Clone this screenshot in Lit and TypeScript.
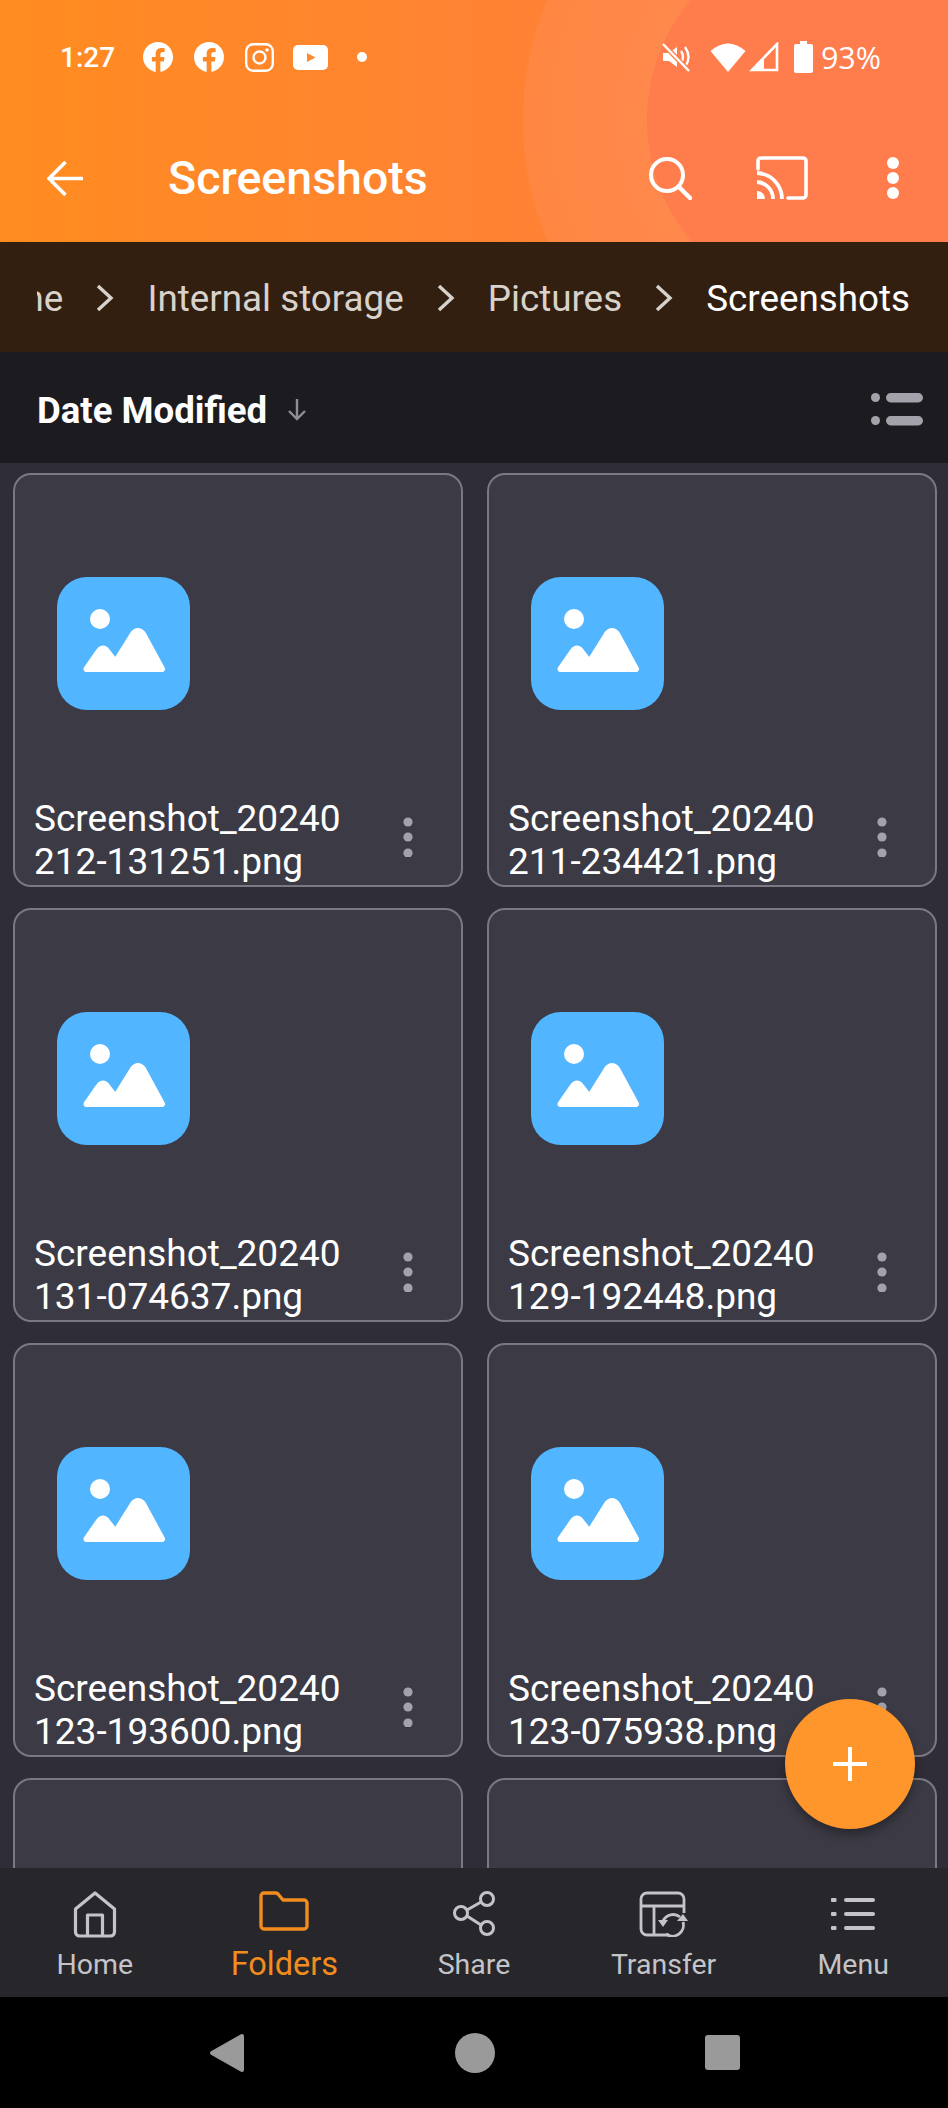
import { LitElement, html, css, svg } from "lit";
import { customElement } from "lit/decorators.js";

const files = [
  "212-131251.png", "211-234421.png", "131-074637.png", "129-192448.png",
  "123-193600.png", "123-075938.png", "", "",
];

const fb = svg`<path fill="#fff" d="M24 12.07C24 5.44 18.63.07 12 .07S0 5.44 0 12.07c0 5.99 4.39 10.95 10.13 11.85v-8.38H7.08v-3.47h3.05V9.43c0-3.01 1.79-4.67 4.53-4.67 1.31 0 2.69.23 2.69.23v2.95h-1.51c-1.49 0-1.96.93-1.96 1.85v2.25h3.33l-.53 3.47h-2.8v8.38C19.61 23.02 24 18.06 24 12.07z"/>`;

@customElement("app-root")
export class AppRoot extends LitElement {
  static styles = css`
    :host { display: block; width: 948px; height: 2108px; position: relative; overflow: hidden; font-family: Roboto, sans-serif; }
    svg { display: block; flex: none; }
    .page { display: flex; flex-direction: column; height: 2108px; }
    .header {
      height: 242px; flex: none; color: #fff;
      background:
        radial-gradient(circle 312px at 835px 120px, #ff7c4c 187.5px, #ff894c 188.5px, #ff8742 311.5px, rgba(255,135,66,0) 312.5px),
        linear-gradient(90deg, #ff8c20 0%, #ff8234 55%, #ff7c4c 100%);
    }
    .status { height: 114px; display: flex; align-items: center; padding: 0 67px 0 60px; }
    .time { font-size: 28px; font-weight: 500; width: 83px; }
    .notifs { display: flex; align-items: center; }
    .sysicons { margin-left: auto; display: flex; align-items: center; }
    .pct { font-size: 30.5px; margin-left: 8px; font-family: "Open Sans", Roboto, sans-serif; }
    .toolbar { height: 128px; display: flex; align-items: center; padding: 0 49px 0 47px; }
    .title { font-size: 46.5px; font-weight: 500; margin-left: 84px; }
    .tools { margin-left: auto; display: flex; align-items: center; }
    .crumbs { height: 110px; box-sizing: border-box; flex: none; background: #331f0f; padding: 2px 38px 0 37px; }
    .crumbs-clip { height: 100%; overflow: hidden; display: flex; align-items: center; justify-content: flex-end; gap: 33px; font-size: 36.8px; color: #d8d2cd; white-space: nowrap; }
    .crumbs-clip .cur { color: #fff; }
    .sortbar { height: 111px; box-sizing: border-box; flex: none; background: #1c1c20; display: flex; align-items: center; padding: 4px 25px 0 37px; }
    .sortname { font-size: 36.6px; font-weight: 700; color: #fff; margin-right: 20px; position: relative; top: 1px; }
    .sortbar .list { margin-left: auto; }
    .main { flex: 1; min-height: 0; overflow: hidden; background: #2f2e38; padding: 10px 11px 0 13px; }
    .grid { display: grid; grid-template-columns: 450px 450px; grid-auto-rows: 414px; column-gap: 24px; row-gap: 21px; }
    .card { box-sizing: border-box; background: #3c3b45; border: 2px solid #797883; border-radius: 18px; display: flex; flex-direction: column; }
    .thumb { margin: 102px 0 0 42px; }
    .name { margin-top: auto; display: flex; align-items: center; padding: 0 48px 2px 19px; }
    .fname { flex: 1; font-size: 37px; line-height: 43px; color: #fff; white-space: nowrap; }
    .fname span { display: block; }
    .more { margin-bottom: 6px; }
    .nav { height: 129px; flex: none; background: #27262b; display: grid; grid-template-columns: repeat(5, 1fr); }
    .item { display: flex; flex-direction: column; align-items: center; padding-top: 23px; color: #c4c4c8; font-size: 28.5px; }
    .item .ico { height: 49px; display: flex; align-items: flex-start; justify-content: center; }
    .item .lbl { line-height: 36px; margin-top: 7px; }
    .item.on { color: #f28c1e; }
    .item.on .lbl { font-size: 32.5px; margin-top: 6px; }
    .sysnav { height: 111px; flex: none; background: #000; position: relative; display: flex; align-items: center; padding: 0 0 0 209px; }
    .fab { position: absolute; right: 33px; bottom: 279px; width: 130px; height: 130px; border-radius: 50%; background: #ff962b; box-shadow: 0 6px 10px rgba(0,0,0,.32); display: flex; align-items: center; justify-content: center; }
  `;

  private thumb() {
    return html`<svg class="thumb" width="133" height="133" viewBox="0 0 133 133">
      <rect width="133" height="133" rx="30" fill="#52b5ff"/>
      <circle cx="43" cy="42" r="10" fill="#fff"/>
      <path d="M29.5 92 L42 74 Q46 69 50 74 L58.5 85 L76 57 Q81 51 86 57 L105 92 Z" fill="#fff" stroke="#fff" stroke-width="6" stroke-linejoin="round"/>
    </svg>`;
  }

  private chevron() {
    return html`<svg width="18" height="28" viewBox="0 0 18 28"><path d="M2 2 L15 14 L2 26" fill="none" stroke="#d8d2cd" stroke-width="3.4"/></svg>`;
  }

  render() {
    return html`<div class="page">
      <div class="header">
        <div class="status">
          <div class="time">1:27</div>
          <div class="notifs">
            <svg width="30" height="30" viewBox="0 0 24 24" style="margin-right:21px">${fb}</svg>
            <svg width="30" height="30" viewBox="0 0 24 24" style="margin-right:21px">${fb}</svg>
            <svg width="29" height="29" viewBox="0 0 29 29" style="margin-right:19px">
              <rect x="1.2" y="1.2" width="26.6" height="26.6" rx="7" fill="none" stroke="#fff" stroke-width="2.4"/>
              <circle cx="14.5" cy="14.5" r="6" fill="none" stroke="#fff" stroke-width="2.4"/>
              <circle cx="22" cy="7" r="1.8" fill="#fff"/>
            </svg>
            <svg width="35" height="25" viewBox="0 0 35 25" style="margin-right:29px">
              <rect width="35" height="25" rx="5" fill="#fff"/>
              <path d="M14 8 L22.5 12.5 L14 17 Z" fill="#ff8a2e"/>
            </svg>
            <svg width="10" height="10" viewBox="0 0 10 10"><circle cx="5" cy="5" r="5" fill="#fff"/></svg>
          </div>
          <div class="sysicons">
            <svg width="30" height="30" viewBox="0 0 30 30" style="margin-right:19px">
              <path d="M2 11 h6 l8 -6 v20 l-8 -6 h-6 Z" fill="#fff"/>
              <path d="M20 9 q4 6 0 12 M24 5 q7 10 0 20" fill="none" stroke="#fff" stroke-width="2.4"/>
              <path d="M3 3 L27 28" stroke="#ff7f4c" stroke-width="5"/>
              <path d="M2 2 L28 29" stroke="#fff" stroke-width="2.4"/>
            </svg>
            <svg width="36" height="30" viewBox="0 0 36 30" style="margin-right:3px">
              <path d="M0.5 9 Q18 -6 35.5 9 L18 30 Z" fill="#fff"/>
            </svg>
            <svg width="30" height="30" viewBox="0 0 30 30" style="margin-right:15px">
              <path d="M28 2 V28 H3 Z" fill="none" stroke="#fff" stroke-width="2.6"/>
              <path d="M3 28 L15 16 V28 Z" fill="#fff"/>
            </svg>
            <svg width="19" height="32" viewBox="0 0 19 32">
              <path d="M6 0 h7 v3 h4 a2 2 0 0 1 2 2 v25 a2 2 0 0 1 -2 2 H2 a2 2 0 0 1 -2 -2 V5 a2 2 0 0 1 2 -2 h4 Z" fill="#fff"/>
            </svg>
            <div class="pct">93%</div>
          </div>
        </div>
        <div class="toolbar">
          <svg width="37" height="37" viewBox="0 0 37 37"><path d="M36 18.5 H3 M18.5 2 L2 18.5 L18.5 35" fill="none" stroke="#fff" stroke-width="3.6"/></svg>
          <div class="title">Screenshots</div>
          <div class="tools">
            <svg width="44" height="44" viewBox="0 0 44 44" style="margin-right:64px">
              <circle cx="19" cy="19" r="16" fill="none" stroke="#fff" stroke-width="4"/>
              <path d="M30.5 30.5 L42 42" stroke="#fff" stroke-width="4.4" stroke-linecap="round"/>
            </svg>
            <svg width="52" height="44" viewBox="0 0 52 44" style="margin-right:79px">
              <path d="M2 13 V5 a3 3 0 0 1 3 -3 H47 a3 3 0 0 1 3 3 V39 a3 3 0 0 1 -3 3 H32" fill="none" stroke="#fff" stroke-width="3.6" stroke-linecap="round"/>
              <path d="M1 35 L1 43 L9 43 A8 8 0 0 0 1 35 Z" fill="#fff"/>
              <path d="M1 26 A17 17 0 0 1 17 43 M1 17 A26 26 0 0 1 26 43" fill="none" stroke="#fff" stroke-width="3.8"/>
            </svg>
            <svg width="12" height="44" viewBox="0 0 12 44">
              <circle cx="6" cy="7" r="6" fill="#fff"/><circle cx="6" cy="22" r="6" fill="#fff"/><circle cx="6" cy="37" r="6" fill="#fff"/>
            </svg>
          </div>
        </div>
      </div>

      <div class="crumbs">
        <div class="crumbs-clip">
          <span>Home</span>${this.chevron()}
          <span>Internal storage</span>${this.chevron()}
          <span>Pictures</span>${this.chevron()}
          <span class="cur">Screenshots</span>
        </div>
      </div>

      <div class="sortbar">
        <div class="sortname">Date Modified</div>
        <svg width="20" height="23" viewBox="0 0 20 23"><path d="M10 1 V21 M2 13 L10 21 L18 13" fill="none" stroke="#8f8e96" stroke-width="2.4"/></svg>
        <svg class="list" width="52" height="34" viewBox="0 0 52 34">
          <circle cx="4.5" cy="4.5" r="4.5" fill="#a3a2aa"/>
          <circle cx="4.5" cy="27.5" r="4.5" fill="#a3a2aa"/>
          <rect x="15" y="0" width="37" height="9.5" rx="4.7" fill="#a3a2aa"/>
          <rect x="15" y="23" width="37" height="9.5" rx="4.7" fill="#a3a2aa"/>
        </svg>
      </div>

      <div class="main">
        <div class="grid">
          ${files.map((f) => html`<div class="card">
            ${f ? html`${this.thumb()}
            <div class="name">
              <div class="fname"><span>Screenshot_20240</span><span>${f}</span></div>
              <svg class="more" width="10" height="40" viewBox="0 0 10 40">
                <circle cx="5" cy="5" r="4.6" fill="#a3a2aa"/><circle cx="5" cy="20" r="4.6" fill="#a3a2aa"/><circle cx="5" cy="36" r="4.6" fill="#a3a2aa"/>
              </svg>
            </div>` : ""}
          </div>`)}
        </div>
      </div>

      <div class="nav">
        <div class="item">
          <div class="ico"><svg width="44" height="47" viewBox="0 0 44 47">
            <path d="M2.5 18 L22 2 L41.5 18 V41 a4 4 0 0 1 -4 4 H6.5 a4 4 0 0 1 -4 -4 Z M14.5 45 V24 H29.5 V45" fill="none" stroke="currentColor" stroke-width="3.2" stroke-linejoin="round"/>
          </svg></div>
          <div class="lbl">Home</div>
        </div>
        <div class="item on">
          <div class="ico"><svg width="50" height="40" viewBox="0 0 50 40">
            <path d="M2 5 a3 3 0 0 1 3 -3 H17 a3 3 0 0 1 2 1 L24 9 H45 a3 3 0 0 1 3 3 V35 a3 3 0 0 1 -3 3 H5 a3 3 0 0 1 -3 -3 Z" fill="none" stroke="currentColor" stroke-width="3.4" stroke-linejoin="round"/>
          </svg></div>
          <div class="lbl">Folders</div>
        </div>
        <div class="item">
          <div class="ico"><svg width="44" height="46" viewBox="0 0 44 46">
            <circle cx="9" cy="22" r="6.5" fill="none" stroke="currentColor" stroke-width="3"/>
            <circle cx="35" cy="8" r="6.5" fill="none" stroke="currentColor" stroke-width="3"/>
            <circle cx="35" cy="37" r="6.5" fill="none" stroke="currentColor" stroke-width="3"/>
            <path d="M15 19 L29 11 M15 25 L29 34" stroke="currentColor" stroke-width="3"/>
          </svg></div>
          <div class="lbl">Share</div>
        </div>
        <div class="item">
          <div class="ico"><svg width="50" height="46" viewBox="0 0 50 46">
            <path d="M30 44 H8 a6 6 0 0 1 -6 -6 V8 a6 6 0 0 1 6 -6 H39 a6 6 0 0 1 6 6 V22 M2 15 H45 M15 15 V44 M24 15 H15" fill="none" stroke="currentColor" stroke-width="2.8"/>
            <path d="M24 30 A11 11 0 0 1 41 26 M44 31 A11 11 0 0 1 27 43" fill="none" stroke="currentColor" stroke-width="2.8"/>
            <path d="M19 29 L29 29 L24 36 Z M38 30 L49 30 L44 23 Z" fill="currentColor"/>
          </svg></div>
          <div class="lbl">Transfer</div>
        </div>
        <div class="item">
          <div class="ico"><svg width="44" height="36" viewBox="0 0 44 36" style="margin-top:5px">
            <rect x="0" y="2" width="5.5" height="4" rx="1" fill="currentColor"/>
            <rect x="0" y="16" width="5.5" height="4" rx="1" fill="currentColor"/>
            <rect x="0" y="30" width="5.5" height="4" rx="1" fill="currentColor"/>
            <rect x="13" y="2" width="31" height="4" rx="2" fill="currentColor"/>
            <rect x="13" y="16" width="31" height="4" rx="2" fill="currentColor"/>
            <rect x="13" y="30" width="31" height="4" rx="2" fill="currentColor"/>
          </svg></div>
          <div class="lbl">Menu</div>
        </div>
      </div>

      <div class="sysnav">
        <svg width="36" height="40" viewBox="0 0 36 40" style="margin-right:210px">
          <path d="M3 20 L33 3 V37 Z" fill="#9a9a9a" stroke="#9a9a9a" stroke-width="4" stroke-linejoin="round"/>
        </svg>
        <svg width="40" height="40" viewBox="0 0 40 40" style="margin-right:210px"><circle cx="20" cy="20" r="20" fill="#9a9a9a"/></svg>
        <svg width="35" height="35" viewBox="0 0 35 35"><rect width="35" height="35" rx="3" fill="#9a9a9a"/></svg>
      </div>
    </div>
    <div class="fab">
      <svg width="34" height="34" viewBox="0 0 34 34"><path d="M17 1 V33 M1 17 H33" stroke="#fff" stroke-width="4" stroke-linecap="round"/></svg>
    </div>`;
  }
}
